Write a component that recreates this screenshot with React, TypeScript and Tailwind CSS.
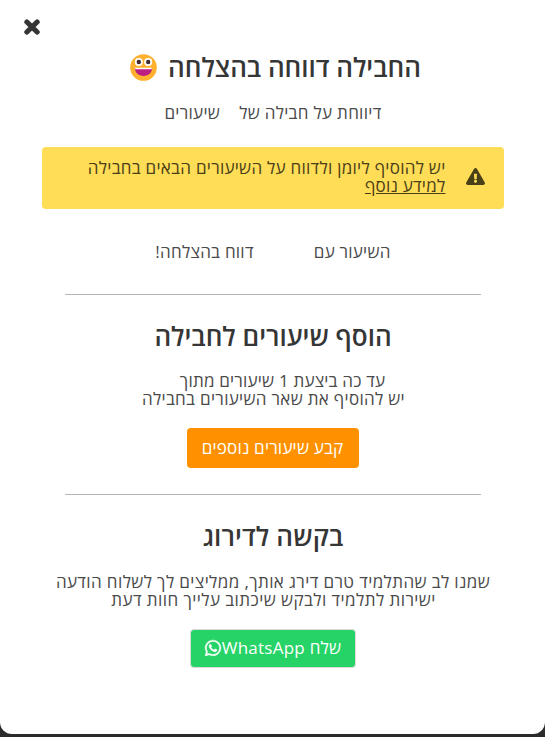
import { FaExclamationTriangle, FaWhatsapp } from 'react-icons/fa'

function HappyFace() {
  return (
    <svg viewBox="0 0 27 27" className="size-[27px] shrink-0">
      <circle cx="13.5" cy="13.5" r="13.3" fill="#ffb02e" />
      <circle cx="8.8" cy="8" r="4" fill="#fff" />
      <circle cx="18.2" cy="8" r="4" fill="#fff" />
      <circle cx="8.8" cy="8" r="2.2" fill="#402a32" />
      <circle cx="18.2" cy="8" r="2.2" fill="#402a32" />
      <path d="M5 14.3h17c0 4.5-3.6 7.6-8.5 7.6S5 18.8 5 14.3z" fill="#bb1d80" />
      <path d="M5 13.7h17l-.5 1.5h-16z" fill="#fff" />
    </svg>
  )
}

function CloseIcon() {
  return (
    <svg viewBox="0 0 16 16" className="size-4">
      <path
        d="M2.900 3l10.200 10M13.100 3L2.900 13"
        stroke="currentColor"
        strokeWidth="5.200"
        strokeLinecap="round"
      />
    </svg>
  )
}

export default function App() {
  return (
    <div className="h-[737px] w-[545px] overflow-hidden bg-[#2b2b2b]">
      <div
        dir="rtl"
        className="relative flex h-[734px] flex-col items-center rounded-b-[12px] bg-white text-[17px] leading-[17.6px] tracking-[0.25px] text-[#4a4a4a] font-['Open_Sans','Liberation_Sans',sans-serif] whitespace-nowrap"
      >
        <button className="absolute left-[24px] top-[19px] text-[#363636]">
          <CloseIcon />
        </button>

        <h1 className="mt-[52px] flex h-[30px] items-center gap-[11px] pl-[6px] text-[26px] font-semibold leading-[30px] tracking-normal text-[#363636]">
          <span>החבילה דווחה בהצלחה</span>
          <HappyFace />
        </h1>
        <p className="mt-[22px] flex h-[18px] gap-[19px] pl-px tracking-[0.3px]">
          <span>דיווחת על חבילה של</span>
          <span>שיעורים</span>
        </p>

        <div className="mt-[25px] flex h-[62px] w-[462px] items-start rounded bg-[#ffdd57] pr-[19px] pt-[12px] text-[#4a4018]">
          <FaExclamationTriangle className="mt-[8px] size-[19px]" />
          <div className="mr-[20px] flex flex-col items-start">
            <span className="tracking-[0.27px]">
              יש להוסיף ליומן ולדווח על השיעורים הבאים בחבילה
            </span>
            <a className="underline">למידע נוסף</a>
          </div>
        </div>

        <p className="mt-[34px] flex h-[18px] gap-[60px] pl-px">
          <span>השיעור עם</span>
          <span>דווח בהצלחה!</span>
        </p>

        <hr className="mt-[33px] w-[416px] border-[#b5b5b5]" />

        <h2 className="mt-[26px] h-[30px] pl-px text-[26px] font-semibold leading-[30px] tracking-normal text-[#363636]">
          הוסף שיעורים לחבילה
        </h2>
        <div className="mt-[21px] flex h-[37px] flex-col items-center">
          <span className="pl-[20px] tracking-[0.2px]">עד כה ביצעת 1 שיעורים מתוך</span>
          <span className="pl-[2px] tracking-[0.31px]">יש להוסיף את שאר השיעורים בחבילה</span>
        </div>
        <button className="mt-[19px] h-[40px] w-[172px] rounded bg-[#ff9100] font-medium tracking-[0.2px] text-white">
          קבע שיעורים נוספים
        </button>

        <hr className="mt-[26px] w-[416px] border-[#b5b5b5]" />

        <h2 className="mt-[26px] h-[30px] pl-px text-[26px] font-semibold leading-[30px] tracking-[0.15px] text-[#363636]">
          בקשה לדירוג
        </h2>
        <div className="mt-[22px] flex h-[36px] flex-col items-center">
          <span className="pl-px tracking-[0.39px]">
            שמנו לב שהתלמיד טרם דירג אותך, ממליצים לך לשלוח הודעה
          </span>
          <span className="pl-[2px] tracking-[0.43px]">
            ישירות לתלמיד ולבקש שיכתוב עלייך חוות דעת
          </span>
        </div>
        <button className="mt-[20px] flex h-[39px] w-[166px] items-center justify-center rounded border border-[#dbdbdb] bg-[#25d366] pb-px font-medium tracking-[0.25px] text-white">
          <span>שלח WhatsApp</span>
          <FaWhatsapp className="size-[18px] stroke-white stroke-[14px]" />
        </button>
      </div>
    </div>
  )
}
